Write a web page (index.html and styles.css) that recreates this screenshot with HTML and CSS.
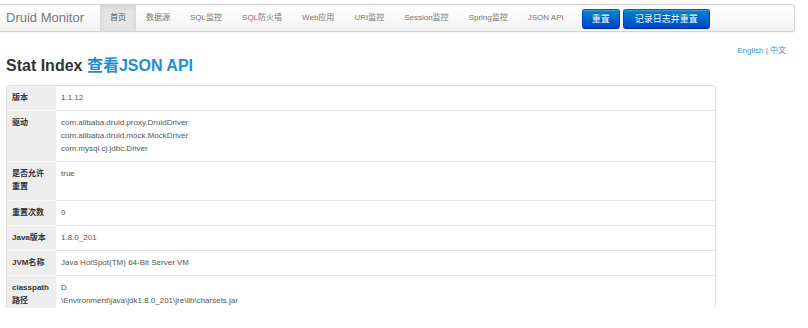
FILE: index.html
```html
<!DOCTYPE html>
<html lang="zh-CN">
<head>
<meta charset="utf-8">
<title>Druid Monitor</title>
<link rel="stylesheet" href="styles.css">
</head>
<body>
<div class="page">
  <nav class="navbar">
    <span class="brand">Druid Monitor</span>
    <ul class="nav">
      <li class="active"><a href="#">首页</a></li>
      <li><a href="#">数据源</a></li>
      <li><a href="#">SQL监控</a></li>
      <li><a href="#">SQL防火墙</a></li>
      <li><a href="#">Web应用</a></li>
      <li><a href="#">URI监控</a></li>
      <li><a href="#">Session监控</a></li>
      <li><a href="#">Spring监控</a></li>
      <li><a href="#">JSON API</a></li>
    </ul>
    <div class="actions">
      <a class="btn btn-reset" href="#">重置</a>
      <a class="btn btn-log" href="#">记录日志并重置</a>
    </div>
  </nav>
  <div class="container">
    <div class="lang"><a href="#">English</a> | <a href="#">中文</a></div>
    <h3 class="title">Stat Index <a href="#">查看JSON API</a></h3>
    <table class="stat">
      <tr><th>版本</th><td>1.1.12</td></tr>
      <tr><th>驱动</th><td>com.alibaba.druid.proxy.DruidDriver<br>com.alibaba.druid.mock.MockDriver<br>com.mysql.cj.jdbc.Driver</td></tr>
      <tr class="tall"><th>是否允许重置</th><td>true</td></tr>
      <tr><th>重置次数</th><td>0</td></tr>
      <tr><th>Java版本</th><td>1.8.0_201</td></tr>
      <tr><th>JVM名称</th><td>Java HotSpot(TM) 64-Bit Server VM</td></tr>
      <tr><th>classpath路径</th><td>D<br>\Environment\java\jdk1.8.0_201\jre\lib\charsets.jar</td></tr>
    </table>
  </div>
</div>
</body>
</html>
```
FILE: styles.css
```css
* { box-sizing: border-box; }
html, body { margin: 0; padding: 0; background: #fff; }
body {
  font-family: "Liberation Sans", "Noto Sans CJK SC", sans-serif;
  color: #333;
}
a { text-decoration: none; }
.page {
  height: 308px;
  overflow: hidden;
}
.navbar {
  margin-top: 4px;
  width: 795px;
  height: 28px;
  display: flex;
  align-items: stretch;
  background: linear-gradient(to bottom, #ffffff, #f2f2f2);
  border: 1px solid #d4d4d4;
  border-left: none;
  border-radius: 0 3px 3px 0;
  box-shadow: 0 1px 3px rgba(0,0,0,0.06);
}
.brand {
  font-size: 13px;
  color: #777;
  line-height: 26px;
  padding: 0 16px 0 6px;
}
.nav {
  list-style: none;
  margin: 0;
  padding: 0;
  display: flex;
}
.nav li a {
  display: block;
  padding: 0 10px;
  font-size: 8px;
  line-height: 26px;
  color: #777;
}
.nav li.active a {
  background: #e5e5e5;
  color: #555;
  box-shadow: inset 0 2px 6px rgba(0,0,0,0.1);
}
.actions {
  display: flex;
  gap: 3px;
  margin-left: 8px;
  align-items: flex-start;
  padding-top: 4px;
}
.btn {
  display: block;
  height: 20px;
  line-height: 18px;
  font-size: 9px;
  color: #fff;
  border: 1px solid #0044cc;
  border-color: #0055cc #0044cc #003399;
  border-radius: 3px;
  background: linear-gradient(to bottom, #0088cc, #0044cc);
  text-shadow: 0 -1px 0 rgba(0,0,0,0.25);
  box-shadow: inset 0 1px 0 rgba(255,255,255,0.2);
}
.btn-reset { padding: 0 9px; }
.btn-log { padding: 0 11px; }
.container {
  display: flow-root;
  width: 786px;
  padding-left: 6px;
}
.lang {
  float: right;
  margin-top: 14px;
  font-size: 8px;
  line-height: 10px;
  color: #3a8fd0;
}
.lang a { color: #3a8fd0; }
.title {
  margin: 24px 0 9px;
  font-size: 16px;
  line-height: 20px;
  font-weight: bold;
  color: #333;
}
.title a { color: #1a8fd6; }
.stat {
  width: 710px;
  border-collapse: separate;
  border-spacing: 0;
  border: 1px solid #ddd;
  border-radius: 4px;
  font-size: 8px;
  line-height: 13px;
}
.stat th, .stat td {
  padding: 5px 5px 6px;
  text-align: left;
  vertical-align: top;
  border-top: 1px solid #e4e4e4;
}
.stat tr:first-child th, .stat tr:first-child td { border-top: none; }
.stat th {
  width: 49px;
  background: #eeeeee;
  color: #333;
  font-weight: bold;
  border-top-color: #f6f6f6;
}
.stat tr:first-child th { border-top-left-radius: 3px; }
.stat td {
  color: #555;
}
.stat tr.tall th, .stat tr.tall td { padding-bottom: 7px; }
```
